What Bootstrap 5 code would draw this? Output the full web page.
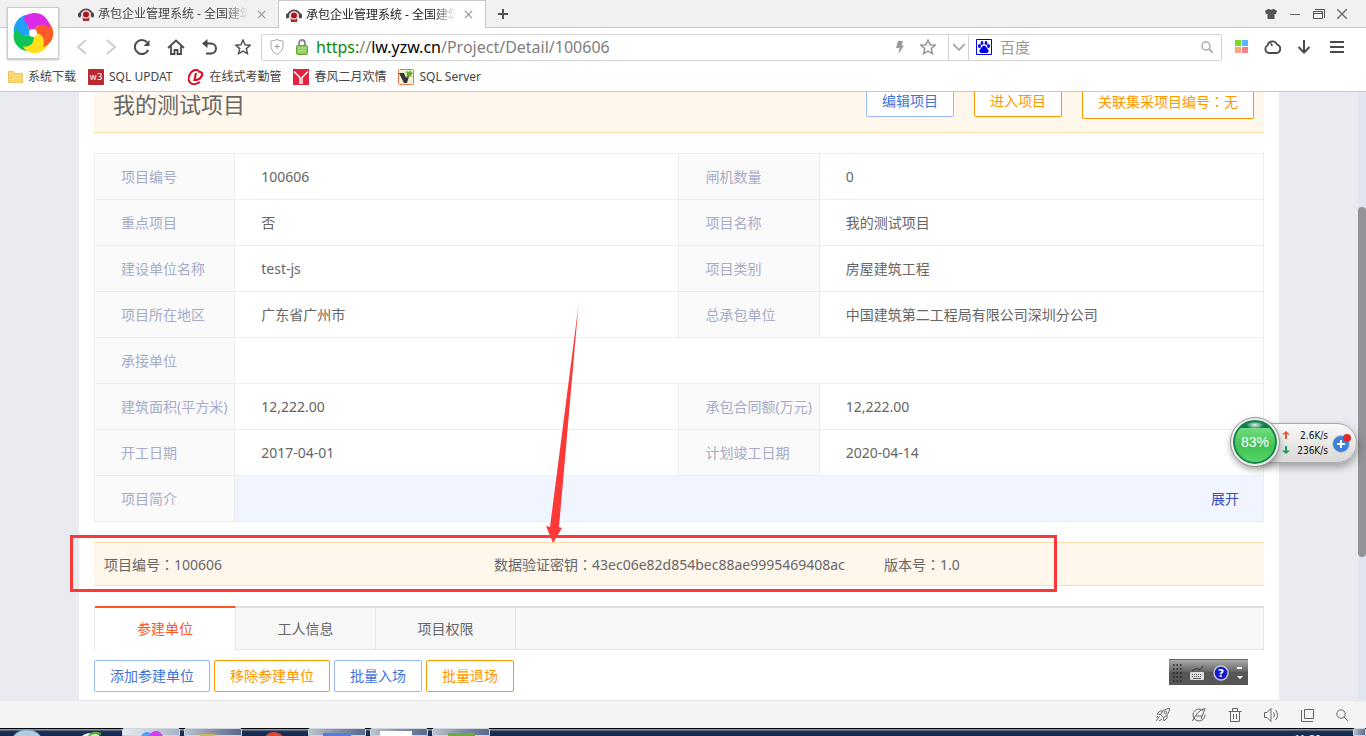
<!DOCTYPE html>
<html lang="zh-CN">
<head>
<meta charset="utf-8">
<meta name="viewport" content="width=device-width, initial-scale=1">
<title>承包企业管理系统 - 全国建筑</title>
<link href="https://cdn.jsdelivr.net/npm/bootstrap@5.3.0/dist/css/bootstrap.min.css" rel="stylesheet">
<style>
body{font-family:"Noto Sans","Noto Sans CJK SC",sans-serif;font-size:14px;line-height:20px;color:#666;background:#fff}
a{text-decoration:none}
svg{display:block;flex:none}
.fw-colon{font-family:"Noto Sans CJK TC",sans-serif}
button.plain{border:0;background:none;padding:0;color:#555}
/* browser chrome */
.tabstrip{height:28px;background:#f1f1f1;border-bottom:1px solid #c8c8c8;padding-left:70px}
.btab{width:208px;height:28px;padding:0 12px 0 8px;gap:4px;font-size:12px;color:#444}
.btab.on{background:#fff;border:1px solid #c8c8c8;border-bottom:0;color:#222;padding-left:7px}
.btab .t{width:150px;overflow:hidden;white-space:nowrap;-webkit-mask-image:linear-gradient(90deg,#000 84%,transparent)}
.btab button{margin-left:auto}
.winbtns{gap:12px;padding-right:19px}
.logo-box{left:7px;top:7px;width:52px;height:52px;background:#fff;border:1px solid #ccc;box-shadow:0 1px 2px #bbb;z-index:3}
.toolbar{height:38px;padding:0 22px 0 76px}
.navs{gap:17px;margin-right:10px}
.addr{height:27px;border:1px solid #d4d4d4;border-radius:2px}
.addr .shield{margin:0 12px 0 8px}
.url-in{border:0;outline:0;width:100%;background:transparent;padding:0;font-size:15px;color:#808080;height:25px;line-height:25px}
.urltext{font-size:16px;line-height:24px;color:#808080;white-space:nowrap}
.urltext b{font-weight:400;color:#000}.urltext i{font-style:normal;color:#0a8a0a}
.searchbox{width:253px;border-left:1px solid #d4d4d4;padding:0 7px}
.searchbox input::placeholder{color:#999;opacity:1}
.dropbtn{width:20px;border-left:1px solid #d4d4d4!important;height:25px}
.tools{gap:15px;padding-left:13px}
.bookmarks{height:26px;border-bottom:1px solid #c8c8c8;padding:0 8px 4px;gap:12px;font-size:12px}
.bookmarks a{color:#444;gap:5px}
/* page */
.view{background:#eaebf0;min-height:0}
.sheet{max-width:1200px;width:100%;background:#fff;padding:0 15px;margin-top:-20px;height:640px;flex:none}
.cream{background:#fff6ec;border-bottom:1px solid #ffdcab}
.title-band{height:61px;padding:0 10px 2px 19px}
.title-band h1{font-size:22px;line-height:30px;margin:6px 0 0;font-weight:400;color:#666}
.acts{gap:20px}
.ob{border:1px solid #99b9ff;color:#4374d9;background:#fff;border-radius:2px;height:32px;padding:0 15px;font-size:14px;line-height:20px}
.ob.org{border-color:#ff9800;color:#ff9800}
.ob.tall{height:36px}
.info{table-layout:fixed;width:100%;margin:20px 0;border-collapse:collapse}
.info th,.info td{border:1px solid #ededed;height:46px;font-weight:400;padding:0 0 0 26px;vertical-align:middle;white-space:nowrap}
.info th{background:#fafafa;color:#a6abc8;padding-right:4px}
.info .brief{background:#f0f5ff;padding-right:24px}
.info .brief a{color:#3d4db7}
.keys{border-top:1px solid #ffdcab;height:44px;margin-bottom:20px}
.keys .col-4{padding:0 10px;white-space:nowrap}
.ptabs{background:#f7f7f7;border:1px solid #e4e4e4;border-top:2px solid #e0e0e0;height:44px}
.ptabs button{width:141px;border:0;border-right:1px solid #e4e4e4;background:none;color:#666;margin-top:-2px;height:43px;border-top:2px solid transparent;padding:0}
.ptabs button.on{color:#ff5722;background:#fff;border-top-color:#ff5722;height:44px;padding-bottom:1px}
.ptabs button+button{width:140px}
.ops{padding-top:10px}
.mark-frame{left:-24px;top:-8px;width:987px;height:57px;border:3px solid #fc3939}
.mark-arrow{left:446px;top:-241px}
.track{width:8px;background:#e0e5f1;border-radius:4px;padding-top:115px}
.thumb{height:350px;background:#929297;border-radius:4px}
/* floating widgets */
.speed{right:9px;top:423px;width:107px;height:40px;border-radius:20px;border:1px solid #aaa;background:linear-gradient(#fafafa,#d8d8d8);box-shadow:1px 4px 8px #0005;font:10px/15px "DejaVu Sans Condensed","DejaVu Sans",sans-serif;color:#111;z-index:4;padding:0 0 0 28px}
.ball{left:-20px;top:-6px;width:48px;height:48px;border-radius:50%;border:2px solid #eee;outline:1px solid #999;background:radial-gradient(ellipse 9px 4px at 50% 5px,#e8f5ee,transparent),linear-gradient(#16784f 0 18%,#71dc7c 19%,#3fc455 60%,#5bd668);box-shadow:inset 0 0 0 2px #178450,0 3px 7px #0006;color:#fff;font:14px/44px "Liberation Sans",sans-serif;text-align:center}
.rates{width:37px;text-align:right}
.ime{right:118px;bottom:51px;width:79px;height:26px;background:linear-gradient(#aaa,#686868 45%,#565656 50%);border-top:1px solid #666;z-index:4;padding:0 4px 0 3px}
.statusbar{height:28px;background:#f4f4f4;border-top:1px solid #e6e6e6;padding-right:17px;gap:20px}
.taskbar{height:8px;background:linear-gradient(#000 0 1px,#8296ae 1px 2px,#1c3157 3px,#17284a);overflow:hidden}
.slot{width:58px;height:8px;border-radius:2px 2px 0 0;background:linear-gradient(100deg,#bcc3d0,#8791a8 50%,#58678a);border:1px solid #d0d6e0;margin-right:4px}
.slot.lit{background:linear-gradient(100deg,#e8ebf0,#c3cad6 60%,#a7b2c4)}
.clock{font:11px/12px "Liberation Sans",sans-serif;color:#fff;margin-top:5px}
</style>
</head>
<body class="vh-100 d-flex flex-column overflow-hidden position-relative">
<svg width="0" height="0" class="position-absolute" aria-hidden="true"><defs>
<symbol id="fav" viewBox="0 0 16 16"><path d="M1.500 10A6.500 6.500 0 0 1 14.500 10" fill="none" stroke="#4a4455" stroke-width="1.800"/><rect x="0" y="6.500" width="3" height="5" rx="1.500" fill="#4a4455"/><rect x="13" y="6.500" width="3" height="5" rx="1.500" fill="#4a4455"/><circle cx="8" cy="8.500" r="4.300" fill="#fff" stroke="#c98f92" stroke-width=".8"/><circle cx="8" cy="8.500" r="3" fill="#a9161d"/><path d="M4.500 11.500Q8 14 11.500 11.500L11 15H5z" fill="#a52a30"/></symbol>
<symbol id="x" viewBox="0 0 10 10"><path d="M1 1l8 8M9 1l-8 8" stroke="#999" stroke-width="1.400"/></symbol>
<symbol id="star" viewBox="0 0 16 16"><path d="M8 1l2.100 4.700 5 .5-3.800 3.400 1.100 5L8 12l-4.400 2.600 1.100-5L.9 6.200l5-.5z" fill="none" stroke="currentColor" stroke-width="1.500"/></symbol>
<symbol id="mag" viewBox="0 0 14 14"><circle cx="6" cy="6" r="4" fill="none" stroke="currentColor" stroke-width="1.500"/><path d="M9 9l3.500 3.500" stroke="currentColor" stroke-width="1.800"/></symbol>
</defs></svg>

<header>
  <div class="tabstrip d-flex align-items-start">
    <div class="btab d-flex align-items-center"><svg width="16" height="16"><use href="#fav"/></svg><span class="t">承包企业管理系统 - 全国建筑</span><button class="plain" aria-label="关闭标签"><svg width="9" height="9"><use href="#x"/></svg></button></div>
    <div class="btab on d-flex align-items-center"><svg width="16" height="16"><use href="#fav"/></svg><span class="t">承包企业管理系统 - 全国建筑</span><button class="plain" aria-label="关闭标签"><svg width="9" height="9"><use href="#x"/></svg></button></div>
    <button class="plain align-self-center ms-2 ps-1" aria-label="新标签"><svg width="10" height="10"><path d="M5 0v10M0 5h10" stroke="#555" stroke-width="2"/></svg></button>
    <div class="winbtns d-flex align-items-center ms-auto align-self-center">
      <button class="plain" aria-label="皮肤"><svg width="12" height="10"><path d="M0 2l3-2h1q2 1.500 4 0h1l3 2-1 3H9.500v5h-7V5H1z" fill="#555"/></svg></button>
      <button class="plain" aria-label="最小化"><svg width="12" height="10"><path d="M1 5.500h10" stroke="#666"/></svg></button>
      <button class="plain" aria-label="还原"><svg width="12" height="10"><path d="M.5 2.500h9v7h-9zM.5 4.500h9M2 .5h9.500V9" fill="none" stroke="#555"/></svg></button>
      <button class="plain" aria-label="关闭"><svg width="10" height="10"><path d="M0 0l10 10M10 0L0 10" stroke="#666" stroke-width="1.300"/></svg></button>
    </div>
  </div>
  <div class="toolbar d-flex align-items-center">
    <nav class="navs d-flex align-items-center">
      <button class="plain" aria-label="后退"><svg width="12" height="16"><path d="M10 1L2 8l8 7" fill="none" stroke="#ccc" stroke-width="2"/></svg></button>
      <button class="plain" aria-label="前进"><svg width="12" height="16"><path d="M2 1l8 7-8 7" fill="none" stroke="#ccc" stroke-width="2"/></svg></button>
      <button class="plain" aria-label="刷新"><svg width="16" height="16"><path d="M14.200 11A7 7 0 1 1 13 3.300" fill="none" stroke="#4a4a4a" stroke-width="2"/><path d="M15.500 1v6h-6z" fill="#4a4a4a"/></svg></button>
      <button class="plain" aria-label="主页"><svg width="18" height="16"><path d="M1 9l8-7.500L17 9M4 7v8h3.500v-4h3v4H14V7" fill="none" stroke="#4a4a4a" stroke-width="1.800"/></svg></button>
      <button class="plain" aria-label="撤销"><svg width="16" height="16"><path d="M2 4.500h7a5 5 0 0 1 0 10H4" fill="none" stroke="#4a4a4a" stroke-width="2"/><path d="M5.500 0v9L0 4.500z" fill="#4a4a4a"/></svg></button>
      <button class="plain" aria-label="收藏"><svg width="16" height="16"><use href="#star"/></svg></button>
    </nav>
    <div class="addr d-flex align-items-center flex-fill">
      <svg class="shield" width="14" height="16"><path d="M1 2q3 0 6-1.500Q10 2 13 2v6q0 4.500-6 7.500-6-3-6-7.500z" fill="none" stroke="#aaa"/><path d="M7 5v5M4.500 7.500h5" stroke="#999"/></svg>
      <svg width="12" height="16"><path d="M3 8V4a3 3 0 0 1 6 0v4" fill="none" stroke="#888" stroke-width="1.800"/><rect x=".5" y="6.500" width="11" height="9" rx="1" fill="#8ecb5d" stroke="#63a33a"/><path d="M2 9h8M2 12h8" stroke="#bde59b"/></svg>
      <a href="#" class="urltext flex-fill ms-1 ps-1"><i>https:</i>//<b>lw.yzw.cn</b>/Project/Detail/100606</a>
      <svg class="me-3" width="8" height="13"><path d="M2 0h5L5.500 4.500H8L2.500 13 3.500 7H0z" fill="#999"/></svg>
      <button class="plain me-2 pe-1" aria-label="收藏本页" style="color:#999"><svg width="16" height="16"><use href="#star"/></svg></button>
      <button class="plain dropbtn" aria-label="展开地址栏"><svg class="mx-auto" width="12" height="8"><path d="M0 1l6 6 6-6" fill="none" stroke="#aaa" stroke-width="1.800"/></svg></button>
      <div class="searchbox d-flex align-items-center align-self-stretch">
        <svg width="16" height="16"><path d="M.5.500h15v15H.5z" fill="#fff" stroke="#0000e8"/><g fill="#0000e8"><ellipse cx="3.500" cy="7" rx="1.500" ry="2"/><ellipse cx="6" cy="4" rx="1.400" ry="2"/><ellipse cx="10" cy="4" rx="1.400" ry="2"/><ellipse cx="12.500" cy="7" rx="1.500" ry="2"/><path d="M8 6.500q1.500 0 2.500 2l2 2.500q.5 3-2 3H5.500q-2.500 0-2-3l2-2.500q1-2 2.500-2z"/></g></svg>
        <input class="url-in ms-2" type="text" placeholder="百度" aria-label="搜索">
        <svg width="14" height="14" color="#aaa"><use href="#mag"/></svg>
      </div>
    </div>
    <div class="tools d-flex align-items-center">
      <svg width="14" height="14"><path fill="#7d2" d="M0 0h6v6H0z"/><path fill="#5ab4ff" d="M7 0h6v6H7z"/><path fill="#ffa57a" d="M0 7h6v6H0z"/><path fill="#f27f8c" d="M7 7h6v6H7z"/></svg>
      <svg width="18" height="14"><path d="M5 13a4 4 0 0 1-1.500-7.500A5 5 0 0 1 13 4.500 4.400 4.400 0 0 1 13 13zM6.500 3.500Q8 4 8 6" fill="none" stroke="#4a4a4a" stroke-width="1.800"/></svg>
      <svg width="14" height="14"><path d="M7 0v12M1.500 7L7 12.500 12.500 7" fill="none" stroke="#4a4a4a" stroke-width="2"/></svg>
      <svg class="ms-1" width="14" height="12"><path d="M0 1h14M0 6h14M0 11h14" stroke="#4a4a4a" stroke-width="2"/></svg>
    </div>
  </div>
  <nav class="bookmarks d-flex align-items-center">
    <a href="#" class="d-flex align-items-center"><svg width="15" height="12"><path d="M.5 11.500V.500h5l1 2h8v9z" fill="#fbd873" stroke="#edc558"/></svg>系统下载</a>
    <a href="#" class="d-flex align-items-center me-1"><svg width="16" height="16"><rect width="16" height="16" rx="1" fill="#b92b2f"/><text x="1.500" y="11" font-size="9" fill="#fff" font-family="DejaVu Sans">w3</text></svg>SQL UPDAT</a>
    <a href="#" class="d-flex align-items-center"><svg width="16" height="16"><path d="M11 1.500Q5-.5 2 5-1 11 2.500 14 6 16.500 12 13" fill="none" stroke="#e3001b" stroke-width="1.800"/><path d="M8 4l-1.500 7h2Q12.500 10 14 6.500T10 2.500" fill="none" stroke="#e3001b" stroke-width="2"/></svg>在线式考勤管</a>
    <a href="#" class="d-flex align-items-center"><svg width="16" height="16"><path fill="#e6213f" d="M0 0h16v16H0z"/><path d="M1 2.500l6 6V15M15 2.500l-6 6V15" fill="none" stroke="#fff" stroke-width="1.500"/></svg>春风二月欢情</a>
    <a href="#" class="d-flex align-items-center"><svg width="16" height="16"><rect x=".5" y=".5" width="15" height="15" rx="1" fill="#f5eed0" stroke="#dc7a55"/><path d="M1 4h5l2 5 2-5h2L9 14H6z" fill="#333"/><path d="M8 2l3 1 1-2 1 2 2 1-2 2 1 2-3-1-2 2V6z" fill="#5cb01c"/></svg>SQL Server</a>
  </nav>
</header>
<a href="#" class="logo-box position-absolute d-flex align-items-center justify-content-center" aria-label="浏览器"><svg width="44" height="44" viewBox="-22 -22 44 44"><defs><path id="petal" d="M-10-14C-6-21 6-22 12-16 15-13 17-9 16-5 11-10 4-9 1-3L-3-2C-5-6-6-11-10-14z"/></defs><circle r="12" fill="#ffd91a"/><use href="#petal" fill="#20a0ff" transform="rotate(288)"/><use href="#petal" fill="#10c453" transform="rotate(216)"/><use href="#petal" fill="#ffdf1a" transform="rotate(144)"/><use href="#petal" fill="#ff5a2a" transform="rotate(72)"/><use href="#petal" fill="#dc2be8"/><circle r="4" fill="#fff"/></svg></a>

<div class="view d-flex flex-fill overflow-hidden">
  <main class="flex-fill d-flex justify-content-center align-items-start">
    <div class="sheet">
      <div class="title-band cream d-flex align-items-center">
        <h1 class="me-auto">我的测试项目</h1>
        <div class="acts d-flex align-items-center">
          <button class="ob">编辑项目</button><button class="ob org">进入项目</button><button class="ob org tall">关联集采项目编号<span class="fw-colon" lang="zh-TW">&#xFF1A;</span>无</button>
        </div>
      </div>
      <table class="info">
        <colgroup><col style="width:12%"><col style="width:38%"><col style="width:12%"><col style="width:38%"></colgroup>
        <tbody>
        <tr><th scope="row">项目编号</th><td>100606</td><th scope="row">闸机数量</th><td>0</td></tr>
        <tr><th scope="row">重点项目</th><td>否</td><th scope="row">项目名称</th><td>我的测试项目</td></tr>
        <tr><th scope="row">建设单位名称</th><td>test-js</td><th scope="row">项目类别</th><td>房屋建筑工程</td></tr>
        <tr><th scope="row">项目所在地区</th><td>广东省广州市</td><th scope="row">总承包单位</th><td>中国建筑第二工程局有限公司深圳分公司</td></tr>
        <tr><th scope="row">承接单位</th><td colspan="3"></td></tr>
        <tr><th scope="row">建筑面积(平方米)</th><td>12,222.00</td><th scope="row">承包合同额(万元)</th><td>12,222.00</td></tr>
        <tr><th scope="row">开工日期</th><td>2017-04-01</td><th scope="row">计划竣工日期</th><td>2020-04-14</td></tr>
        <tr><th scope="row">项目简介</th><td colspan="3" class="brief text-end"><a href="#">展开</a></td></tr>
        </tbody>
      </table>
      <div class="keys cream position-relative">
        <div class="row g-0 h-100 align-items-center">
          <div class="col-4">项目编号<span class="fw-colon" lang="zh-TW">&#xFF1A;</span>100606</div>
          <div class="col-4">数据验证密钥<span class="fw-colon" lang="zh-TW">&#xFF1A;</span>43ec06e82d854bec88ae9995469408ac</div>
          <div class="col-4">版本号<span class="fw-colon" lang="zh-TW">&#xFF1A;</span>1.0</div>
        </div>
        <div class="mark-frame position-absolute"></div>
        <svg class="mark-arrow position-absolute" width="44" height="242"><path d="M38.500 3L19 225l3 1-9 15-7-17 4 1z" fill="#fc3939"/></svg>
      </div>
      <div class="ptabs d-flex"><button class="on">参建单位</button><button>工人信息</button><button>项目权限</button></div>
      <div class="ops d-flex gap-1">
        <button class="ob">添加参建单位</button><button class="ob org">移除参建单位</button><button class="ob">批量入场</button><button class="ob org">批量退场</button>
      </div>
    </div>
  </main>
  <div class="track"><div class="thumb"></div></div>
</div>

<footer>
  <div class="statusbar d-flex align-items-center justify-content-end">
    <svg width="16" height="16" fill="none" stroke="#666"><path d="M14.500 1.500q-6 0-9 6l3 3q6-3 6-9zM5.500 7.500L2 7l3-3h3M8.500 10.500L9 14l3-3V8M4.500 9.500L1 14M3 9l-1.500 2M7 12l-3 2"/><circle cx="10.500" cy="5.500" r="1.200"/></svg>
    <svg width="16" height="16" fill="none" stroke="#666"><path d="M12 3.500a6 6 0 1 0 2 4M2 13Q7 3 14 1.500L10 12M5 9h6M1 14l3-3"/></svg>
    <svg width="16" height="16" fill="none" stroke="#666"><path d="M1.500 4.500h13M5.500 4V1.500h5V4M3.500 4.500v10h9v-10M6.500 7v5M9.500 7v5"/></svg>
    <svg width="16" height="16" fill="none" stroke="#666"><path d="M1.500 5.500H4l4-4v13l-4-4H1.500zM10.500 5.500q2 2.500 0 5M12.500 3q4 5 0 10"/></svg>
    <svg width="16" height="16" fill="none" stroke="#666"><path d="M5.500 2.500h9v9h-9zM2.500 3v11.500H14"/></svg>
    <svg width="14" height="14" fill="none" stroke="#666"><circle cx="6" cy="6" r="4.200"/><path d="M9 9l4 4"/></svg>
  </div>
  <div class="taskbar d-flex">
    <svg width="122" height="8"><ellipse cx="27" cy="13" rx="15" ry="11" fill="#b4cddd" stroke="#7fb0cf"/><ellipse cx="91" cy="9" rx="9" ry="4" fill="#eee"/><path d="M89 8Q93 3 101 6" fill="none" stroke="#55b52a" stroke-width="2"/></svg>
    <div class="slot lit"><svg width="56" height="8"><circle cx="24" cy="9" r="6" fill="#4da0f5"/><circle cx="33" cy="9" r="7" fill="#d13ef5"/></svg></div>
    <div class="slot"><svg width="56" height="8"><path fill="#d3b567" d="M15 5h15v4H15z"/></svg></div>
    <svg width="62" height="8"><circle cx="28" cy="15" r="11" fill="#d8473d"/></svg>
    <div class="slot"><svg width="56" height="8"><path fill="#527ee0" d="M14 4h28v4H14z"/></svg></div>
    <div class="slot"><svg width="56" height="8"><path fill="#fff" d="M9 2h32v6H9z"/></svg></div>
    <div class="slot"><svg width="56" height="8"><path fill="#68ad3d" d="M15 4h27v4H15z"/></svg></div>
    <span class="clock ms-auto me-4 pe-2">11:36</span>
    <div class="slot me-0" style="width:13px"></div>
  </div>
</footer>

<div class="speed position-absolute d-flex align-items-center">
  <div class="ball position-absolute">83%</div>
  <svg width="12" height="24"><path d="M7 0l4 3.500H8V8H6V3.500H3z" fill="#e95a3a"/><path d="M7 23l4-3.500H8V15H6v4.500H3z" fill="#189c54"/></svg>
  <div class="rates">2.6K/s<br>236K/s</div>
  <svg class="ms-1" width="22" height="22"><circle cx="9" cy="12" r="8.500" fill="#3b82dc" stroke="#ccc"/><path d="M9 8v8M5 12h8" stroke="#fff" stroke-width="2"/><circle cx="15" cy="6" r="4" fill="#de2b2b"/></svg>
</div>
<div class="ime position-absolute d-flex align-items-center justify-content-between">
  <svg width="10" height="18"><g fill="none" stroke="#222" stroke-width="1.500" stroke-dasharray="1.500 2"><path d="M1 1h9M1 5h9M1 9h9M1 13h9M1 17h9"/></g></svg>
  <svg width="16" height="16"><rect x="1" y="7" width="14" height="8" rx="1" fill="#ddd"/><path d="M3 9.500h10M3 11.500h10" stroke="#666" stroke-dasharray="1 1"/><path d="M4 13.500h8" stroke="#666"/><path d="M3 6q4-4 6-2t5-3" fill="none" stroke="#333"/></svg>
  <svg width="16" height="16"><circle cx="8" cy="8" r="7" fill="#1119c9" stroke="#c5c5d5" stroke-width="1.500"/><text x="8" y="12" font-size="11" font-weight="700" text-anchor="middle" fill="#fff" font-family="DejaVu Sans">?</text></svg>
  <svg width="8" height="14"><path d="M1 1h5v2H1zM1 10h6l-3 3z" fill="#fff"/></svg>
</div>
<script src="https://cdn.jsdelivr.net/npm/bootstrap@5.3.0/dist/js/bootstrap.bundle.min.js"></script>
</body>
</html>
